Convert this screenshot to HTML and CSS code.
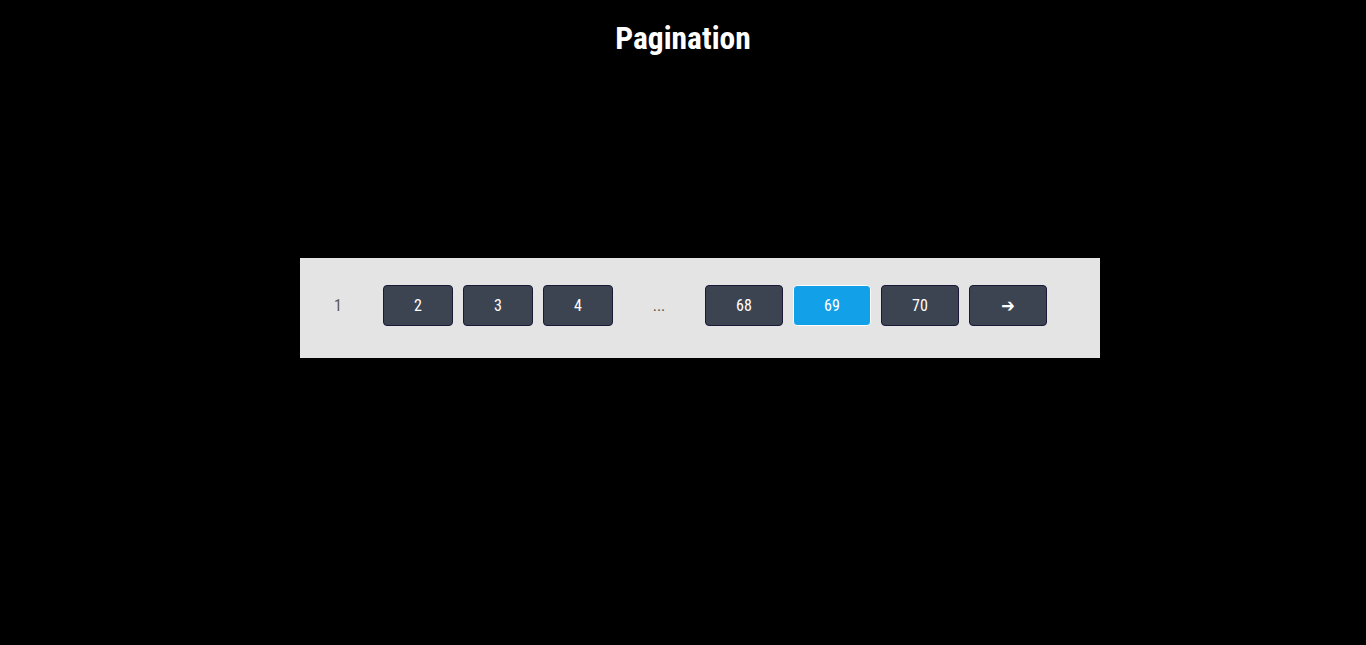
FILE: index.html
```html
<!DOCTYPE html>
<html lang="en">
<head>
<meta charset="utf-8">
<title>Pagination</title>
<link rel="stylesheet" href="styles.css">
</head>
<body>
<h1 class="title">Pagination</h1>
<div class="stage">
  <nav class="pager">
    <span class="page-plain first">1</span>
    <button class="page-btn small">2</button>
    <button class="page-btn small">3</button>
    <button class="page-btn small">4</button>
    <span class="page-plain dots">...</span>
    <button class="page-btn">68</button>
    <button class="page-btn active">69</button>
    <button class="page-btn">70</button>
    <button class="page-btn next">&#10132;</button>
  </nav>
</div>
</body>
</html>
```
FILE: styles.css
```css
html, body {
  margin: 0;
  padding: 0;
  background: #000;
  height: 100%;
}
body {
  font-family: "Roboto Condensed", Roboto, "Liberation Sans", sans-serif;
  color: #fff;
}
.title {
  margin: 0;
  padding-top: 19px;
  font-size: 31.5px;
  font-weight: 700;
  text-align: center;
  line-height: 40px;
  font-stretch: condensed;
}
.stage {
  display: flex;
  justify-content: flex-start;
  padding: 199px 0 0 300px;
}
.pager {
  width: 800px;
  height: 100px;
  box-sizing: border-box;
  background: #e4e4e4;
  display: flex;
  align-items: flex-start;
  gap: 10px;
  padding: 27px 0 0 3px;
}
.page-plain {
  width: 70px;
  height: 41px;
  display: flex;
  align-items: center;
  justify-content: center;
  color: #5a5550;
  font-size: 16px;
}
.page-plain.dots {
  width: 72px;
}
.page-btn {
  width: 78px;
  height: 41px;
  box-sizing: border-box;
  background: #3d4451;
  border: 1px solid #1b1838;
  border-radius: 4px;
  color: #fff;
  font-family: inherit;
  font-size: 16px;
  font-weight: 400;
  padding: 0;
  font-stretch: condensed;
}
.page-btn.small {
  width: 70px;
}
.page-btn.next {
  font-size: 18px;
  font-family: "DejaVu Sans", sans-serif;
}
.page-btn.active {
  background: #12a0e8;
  border-color: #fff;
}
```
